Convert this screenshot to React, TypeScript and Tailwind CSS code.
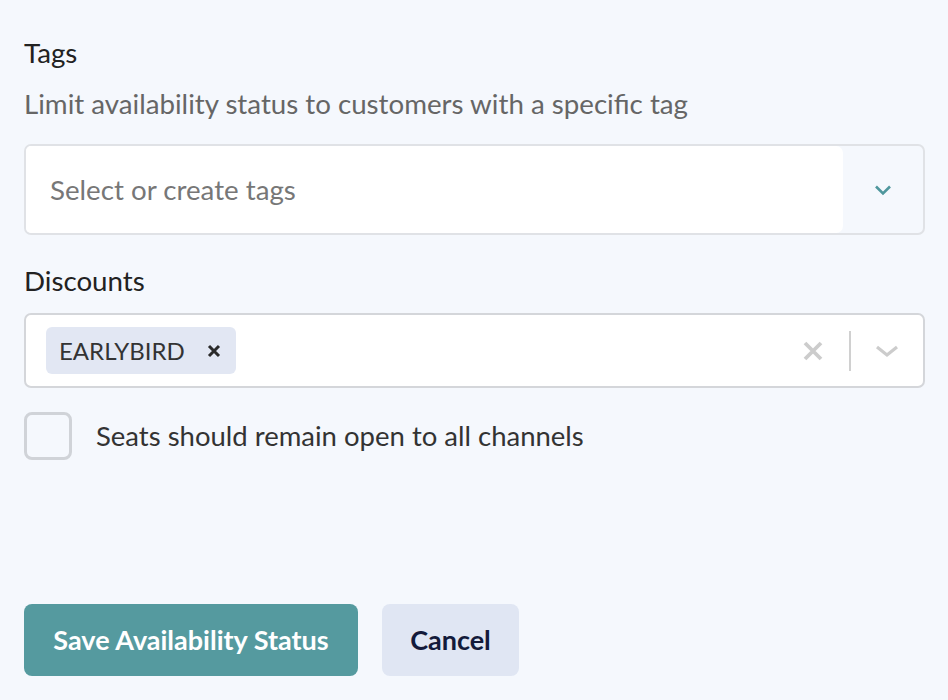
import React from "react";

export default function App() {
  return (
    <div className="min-h-[700px] w-[948px] bg-[#f5f8fd] px-6 pt-[36px] font-['Lato','Noto_Sans',sans-serif]">
      <div className="text-[27.7px] leading-[34px] text-[#222]">Tags</div>
      <div className="mt-[17px] text-[27.7px] leading-[34px] text-[#666]">
        Limit availability status to customers with a specific tag
      </div>
      <div className="mt-[23px] flex h-[91px] w-[901px] overflow-hidden rounded-[7px] border-2 border-[#e0e2e6] bg-[#f5f8fd]">
        <div className="flex flex-1 items-center rounded-r-[7px] bg-white pl-6 text-[27.7px] text-[#777]">
          Select or create tags
        </div>
        <div className="flex w-[80px] items-center justify-center">
          <svg width="18" height="12" viewBox="0 0 18 12" fill="none">
            <path d="M2 2.5 L9 9.5 L16 2.5" stroke="#4f979d" strokeWidth="2.6" />
          </svg>
        </div>
      </div>
      <div className="mt-[29px] text-[27.7px] leading-[34px] text-[#222]">Discounts</div>
      <div className="mt-[15px] flex h-[75px] w-[901px] items-center rounded-[7px] border-2 border-[#d4d6da] bg-white pl-[20px]">
        <div className="flex h-[47px] items-center rounded-[6px] bg-[#e2e7f3] pl-[13px] pr-[15px]">
          <span className="text-[24px] text-[#333]">EARLYBIRD</span>
          <svg className="ml-[22px]" width="14" height="14" viewBox="0 0 14 14">
            <path d="M2 2 L12 12 M12 2 L2 12" stroke="#2a2a2a" strokeWidth="3" />
          </svg>
        </div>
        <div className="flex-1" />
        <svg width="20" height="20" viewBox="0 0 20 20">
          <path d="M2 2 L18 18 M18 2 L2 18" stroke="#cccccc" strokeWidth="3.8" />
        </svg>
        <div className="ml-[26px] h-[40px] w-[2px] bg-[#d0d0d0]" />
        <div className="flex w-[72px] items-center justify-center">
          <svg width="26" height="16" viewBox="0 0 26 16">
            <path d="M3 4 L13 12 L23 4" stroke="#cccccc" strokeWidth="3.2" fill="none" />
          </svg>
        </div>
      </div>
      <div className="mt-[24px] flex items-center">
        <div className="h-[48px] w-[48px] rounded-[8px] border-[3px] border-[#d0d3d8] bg-[#f5f8fd]" />
        <span className="ml-[24px] text-[27.5px] text-[#333]">Seats should remain open to all channels</span>
      </div>
      <div className="mt-[144px] flex gap-[24px]">
        <button className="h-[72px] w-[334px] rounded-[8px] bg-[#559a9f] text-[27px] font-bold text-white">
          Save Availability Status
        </button>
        <button className="h-[72px] w-[137px] rounded-[8px] bg-[#e0e6f3] text-[27px] font-bold text-[#131a3a]">
          Cancel
        </button>
      </div>
    </div>
  );
}
